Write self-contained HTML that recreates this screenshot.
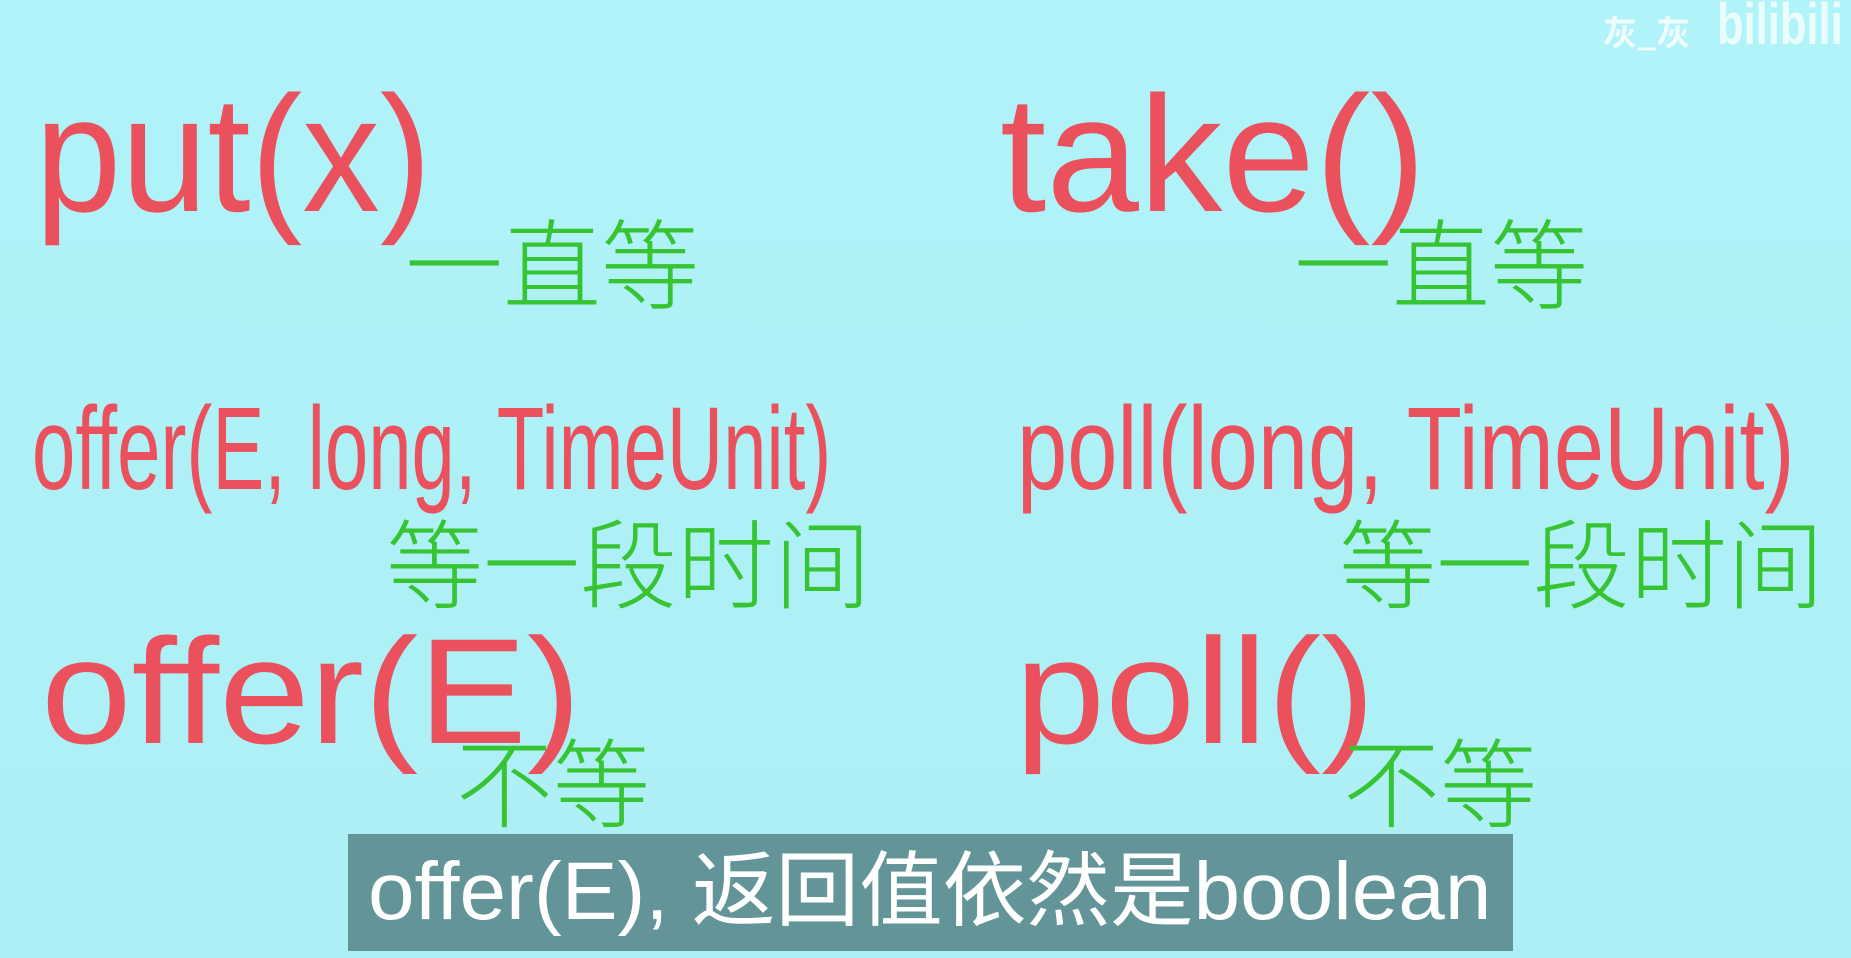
<!DOCTYPE html>
<html><head><meta charset="utf-8"><style>
html,body{margin:0;padding:0}
body{width:1851px;height:958px;overflow:hidden;position:relative;background:linear-gradient(180deg,#b0f3f8 0%,#adf0f5 60%,#aeeff5 100%);font-family:"Liberation Sans","Noto Sans CJK SC",sans-serif}
.t{position:absolute;white-space:nowrap;line-height:1;transform-origin:0 0}
.r{color:#ea515d;font-weight:normal}
.g{color:#36c433;font-family:"Noto Sans CJK SC","WenQuanYi Zen Hei",sans-serif;font-weight:300}
</style></head><body>
<div class="t" style="left:1603px;top:14px;font-size:34px;color:rgba(255,255,255,.8);font-family:'Noto Sans CJK SC',sans-serif;font-weight:bold">灰_灰</div>
<div class="t" style="left:1717px;top:-4px;font-size:58px;color:rgba(255,255,255,.75);font-weight:bold;transform:scaleX(0.75)">bilibili</div>

<div class="t r" style="left:35px;top:72px;font-size:165px;transform:scaleX(0.94)">put(x)</div>
<div class="t g" style="left:405px;top:210px;font-size:98px">一直等</div>
<div class="t r" style="left:1000px;top:72px;font-size:165px;transform:scaleX(1.01)">take()</div>
<div class="t g" style="left:1294px;top:210px;font-size:98px">一直等</div>

<div class="t r" style="left:32px;top:390px;font-size:118px;transform:scaleX(0.66)">offer(E, long, TimeUnit)</div>
<div class="t g" style="left:386px;top:510px;font-size:97px">等一段时间</div>
<div class="t r" style="left:1017px;top:390px;font-size:118px;transform:scaleX(0.765)">poll(long, TimeUnit)</div>
<div class="t g" style="left:1339px;top:510px;font-size:97px">等一段时间</div>

<div class="t r" style="left:41px;top:616px;font-size:150px;transform:scaleX(1.086)">offer(E)</div>
<div class="t g" style="left:456px;top:729px;font-size:97px">不等</div>
<div class="t r" style="left:1015px;top:616px;font-size:150px;transform:scaleX(1.08)">poll()</div>
<div class="t g" style="left:1343px;top:729px;font-size:97px">不等</div>

<div style="position:absolute;left:348px;top:834px;width:1165px;height:117px;background:#639497"></div>
<div class="t" style="left:368px;top:851px;font-size:82px;color:#fff;font-family:'Liberation Sans','Noto Sans CJK SC',sans-serif;transform:scaleX(1.02)">offer(E), 返回值依然是boolean</div>
</body></html>
